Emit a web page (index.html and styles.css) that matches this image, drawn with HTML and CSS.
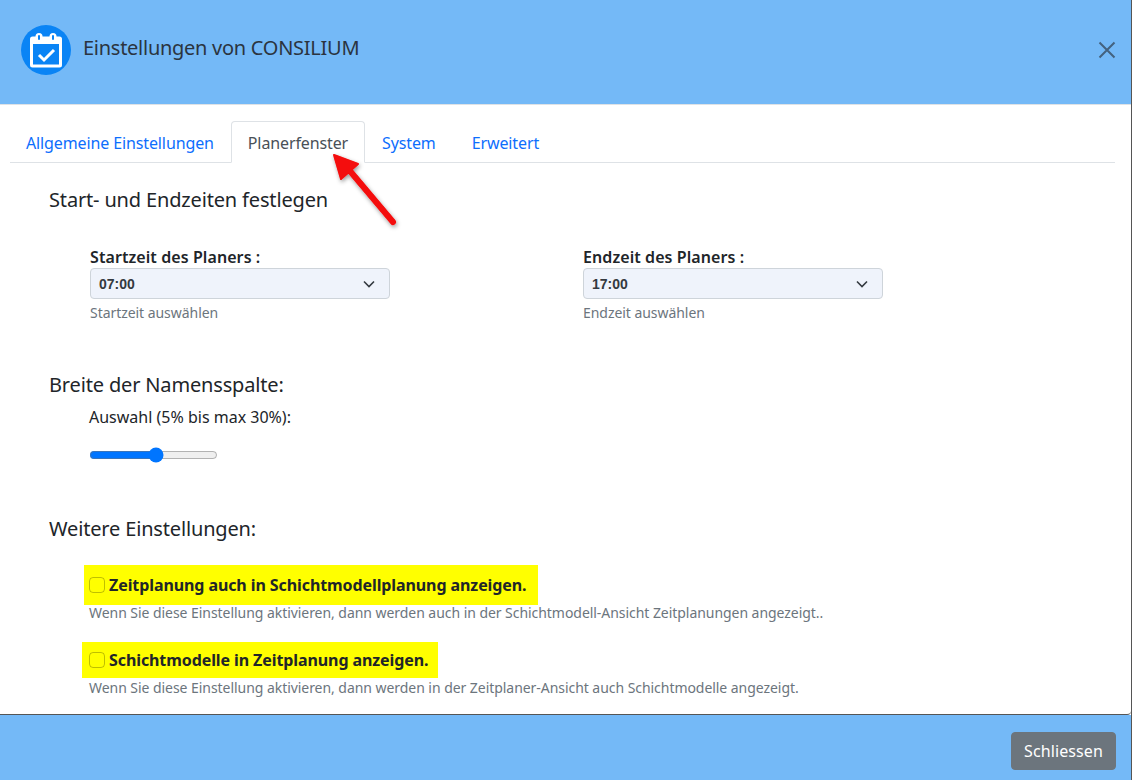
FILE: index.html
```html
<!DOCTYPE html>
<html lang="de">
<head>
  <meta charset="UTF-8">
  <title>Einstellungen von CONSILIUM</title>
  <link rel="stylesheet" href="styles.css">
</head>
<body>
  <div class="modal">
    <div class="modal-header">
      <div class="modal-logo">
        <svg width="36" height="36" viewBox="0 0 36 36">
          <rect x="2" y="4.500" width="32" height="31" rx="2.500" fill="#fff"/>
          <rect x="5" y="12" width="26" height="20.500" fill="#0a84f5"/>
          <rect x="7.500" y="1" width="7" height="9" rx="3.500" fill="#fff"/>
          <rect x="21.500" y="1" width="7" height="9" rx="3.500" fill="#fff"/>
          <rect x="10" y="3" width="2" height="5" rx="1" fill="#0a84f5"/>
          <rect x="24" y="3" width="2" height="5" rx="1" fill="#0a84f5"/>
          <path d="M11 23l5 5 10-10" fill="none" stroke="#fff" stroke-width="3"/>
        </svg>
      </div>
      <h1 class="modal-title">Einstellungen von CONSILIUM</h1>
      <svg class="modal-close" width="18" height="18" viewBox="0 0 18 18" stroke="#44627f" stroke-width="2" fill="none"><path d="M1.500 1.500l15 15M16.500 1.500l-15 15"/></svg>
    </div>

    <div class="modal-body">
      <ul class="tabs">
        <li class="tab">Allgemeine Einstellungen</li>
        <li class="tab active">Planerfenster</li>
        <li class="tab">System</li>
        <li class="tab">Erweitert</li>
      </ul>

      <h2 class="section-title first">Start- und Endzeiten festlegen</h2>
      <div class="time-row">
        <div class="time-col">
          <label class="time-label">Startzeit des Planers :</label>
          <div class="select">
            <span>07:00</span>
            <svg width="12" height="8" viewBox="0 0 12 8" fill="none" stroke="#343a40" stroke-width="1.600"><path d="M1 1.500l5 5 5-5"/></svg>
          </div>
          <small class="hint">Startzeit auswählen</small>
        </div>
        <div class="time-col">
          <label class="time-label">Endzeit des Planers :</label>
          <div class="select">
            <span>17:00</span>
            <svg width="12" height="8" viewBox="0 0 12 8" fill="none" stroke="#343a40" stroke-width="1.600"><path d="M1 1.500l5 5 5-5"/></svg>
          </div>
          <small class="hint">Endzeit auswählen</small>
        </div>
      </div>

      <h2 class="section-title width-title">Breite der Namensspalte:</h2>
      <div class="range-block">
        <div class="range-label">Auswahl (5% bis max 30%):</div>
        <input class="range" type="range" min="5" max="30" value="18">
      </div>

      <h2 class="section-title more-title">Weitere Einstellungen:</h2>
      <div class="option">
        <div class="mark mark-one"><span class="check"></span><b>Zeitplanung auch in Schichtmodellplanung anzeigen.</b></div>
        <small class="hint option-hint">Wenn Sie diese Einstellung aktivieren, dann werden auch in der Schichtmodell-Ansicht Zeitplanungen angezeigt..</small>
      </div>
      <div class="option">
        <div class="mark mark-two"><span class="check"></span><b>Schichtmodelle in Zeitplanung anzeigen.</b></div>
        <small class="hint option-hint">Wenn Sie diese Einstellung aktivieren, dann werden in der Zeitplaner-Ansicht auch Schichtmodelle angezeigt.</small>
      </div>

      <!-- arrow drawn over the screenshot -->
      <svg class="arrow" width="80" height="90" viewBox="0 0 80 90">
        <defs>
          <filter id="arrowShadow" x="-20%" y="-20%" width="140%" height="140%"><feDropShadow dx="1" dy="2" stdDeviation="2" flood-color="#000" flood-opacity=".4"/></filter>
        </defs>
        <g filter="url(#arrowShadow)">
          <path d="M63 71L20 20" stroke="#f40808" stroke-width="6" stroke-linecap="round"/>
          <path d="M4 4l24 9-17 15z" fill="#f40808" stroke="#f40808" stroke-width="2" stroke-linejoin="round"/>
        </g>
      </svg>
    </div>

    <div class="modal-footer">
      <button class="btn-close">Schliessen</button>
    </div>
  </div>
</body>
</html>
```

FILE: styles.css
```css
html, body { margin: 0; height: 100%; }
body { font-family: "Noto Sans", "Open Sans", sans-serif; color: #212529; background: #fff; overflow: hidden; }
* { box-sizing: border-box; }

.modal { height: 780px; display: flex; flex-direction: column; border-right: 1px solid #555; }

.modal-header { height: 105px; flex: none; background: #74b9f7; border-bottom: 1px solid #dee2e6; display: flex; align-items: center; padding: 0 15px 5px 21px; }
.modal-logo { width: 50px; height: 50px; border-radius: 50%; background: #0a84f5; display: flex; align-items: center; justify-content: center; flex: none; }
.modal-title { margin: 0 0 4px 12px; font-size: 20px; font-weight: 400; line-height: 30px; color: #2b3440; letter-spacing: -.27px; flex: 1; }
.modal-close { flex: none; }

.modal-body { flex: 1; position: relative; padding: 16px 16px 0 10px; background: #fff; border-bottom: 1px solid #555; border-bottom-right-radius: 4px; overflow: hidden; }

.tabs { list-style: none; margin: 0; padding: 0; display: flex; height: 42px; border-bottom: 1px solid #dee2e6; width: 1105px; font-size: 16px; letter-spacing: -.12px; }
.tab { padding: 1px 17px 0 18px; line-height: 42px; color: #0d6efd; height: 42px; }
.tab:first-child { padding-left: 16px; }
.tab.active { color: #495057; background: #fff; border: 1px solid #dee2e6; border-bottom-color: #fff; border-radius: 4px 4px 0 0; line-height: 40px; padding: 1px 16px 0 16px; }
.tab.active + .tab { padding-left: 17px; padding-right: 18px; }

.section-title { margin: 0; font-size: 20px; font-weight: 400; line-height: 30px; color: #212529; letter-spacing: -.16px; margin-left: 39px; }
.section-title.first { margin-top: 22px; }
.width-title { margin-top: 47px; }
.more-title { margin-top: 51px; }

.time-row { display: flex; margin: 29px 0 0 80px; }
.time-col { width: 493px; display: flex; flex-direction: column; }
.time-label { font-size: 16px; line-height: 24px; font-weight: 600; letter-spacing: .08px; position: relative; top: 1px; }
.select { width: 300px; height: 31px; background: #eff3fb; border: 1px solid #ced4da; border-radius: 4px; display: flex; align-items: center; justify-content: space-between; padding: 0 14px 0 8px; font-size: 14px; font-weight: 700; font-family: "Liberation Sans", sans-serif; color: #343a40; }
.hint { font-size: 14px; line-height: 21px; color: #6c757d; letter-spacing: -.05px; }
.time-col .hint { margin-top: 3px; }

.range-block { margin: 5px 0 0 79px; }
.range-label { font-size: 16px; line-height: 24px; letter-spacing: 0; }
.range { display: block; margin: 18px 0 0 0; width: 129px; }

.option { margin-left: 74px; }
.mark { display: inline-flex; align-items: center; background: #ff0; font-size: 16px; color: #212529; letter-spacing: -.09px; }
.mark-one { height: 40px; width: 454px; margin: 21px 0 0; padding-left: 5px; }
.mark-two { height: 36px; width: 356px; margin: 19px 0 0 -2px; padding-left: 7px; }
.check { width: 16px; height: 16px; border: 1px solid rgba(0,0,0,.25); border-radius: 4px; margin-right: 4px; flex: none; }
.option-hint { display: block; margin: -3px 0 0 5px; }
.mark-two + .option-hint { margin-top: -1px; }

.arrow { position: absolute; left: 330px; top: 46px; }

.modal-footer { flex: none; height: 65px; background: #74b9f7; display: flex; justify-content: flex-end; align-items: flex-start; padding: 17px 15px 0 0; }
.btn-close { height: 38px; width: 105px; background: #6c757d; border: 1px solid #6c757d; border-radius: 4px; color: #fff; font: 400 16px "Noto Sans", sans-serif; letter-spacing: .1px; padding: 0; }
```
